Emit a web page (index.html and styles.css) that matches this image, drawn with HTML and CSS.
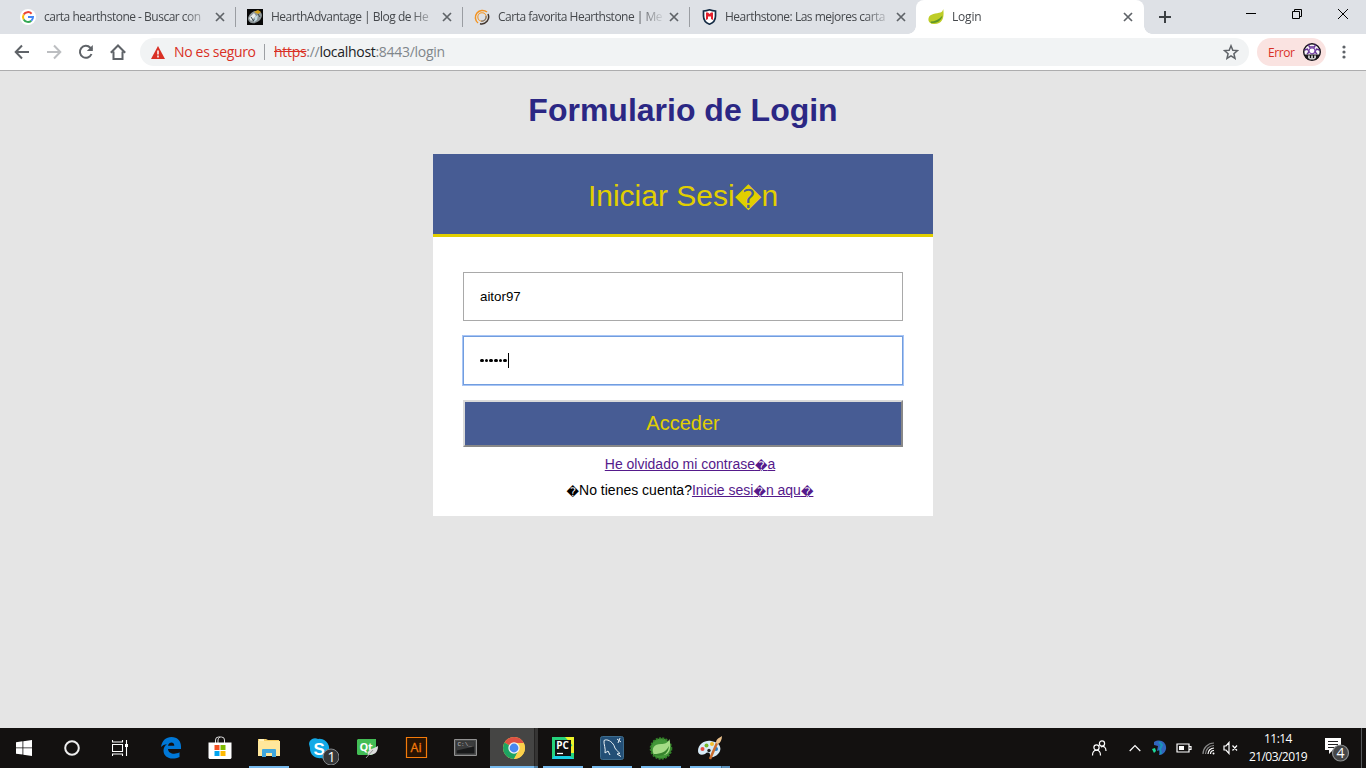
FILE: index.html
```html
<!DOCTYPE html>
<html lang="es">
<head>
<meta charset="utf-8">
<title>Login</title>
<link rel="stylesheet" href="styles.css">
</head>
<body>
<header class="tabstrip">
  <div class="tab">
    <svg class="fav" viewBox="0 0 16 16"><circle cx="8" cy="8" r="8" fill="#fff"/><g fill="none" stroke-width="2"><path d="M11.6 4.7A5 5 0 0 0 3.7 5.5" stroke="#ea4335"/><path d="M3.7 5.5a5 5 0 0 0 0 5" stroke="#fbbc05"/><path d="M3.7 10.5a5 5 0 0 0 7.6 1.2" stroke="#34a853"/><path d="M11.3 11.7A5 5 0 0 0 13 8H8" stroke="#4285f4"/></g></svg>
    <span class="title t1">carta hearthstone - Buscar con</span>
    <svg class="close" viewBox="0 0 10 10"><path d="M1 1l8 8M9 1l-8 8"/></svg>
  </div>
  <div class="tab">
    <svg class="fav" viewBox="0 0 16 16"><path fill="#080808" d="M0 0h16v16H0z"/><ellipse cx="8" cy="8" rx="7.500" ry="5.500" transform="rotate(-35 8 8)" fill="#8d9698"/><path d="M2 9l5-5 2 3-5 5z" fill="#e6eaea"/><path d="M7 3l4-2 3 2-3 2z" fill="#d3a11c"/><path d="M6 12l3-3M4 8l2 3M11 5l2 3" stroke="#37474d"/><path d="M8 8l3-2-1 5-3 2z" fill="#c3dbe4"/></svg>
    <span class="title t2">HearthAdvantage | Blog de He</span>
    <svg class="close" viewBox="0 0 10 10"><path d="M1 1l8 8M9 1l-8 8"/></svg>
  </div>
  <div class="tab">
    <svg class="fav" viewBox="0 0 16 16" fill="none"><path d="M4 14A7 7 0 1 1 13 3" stroke="#f39422" stroke-width="1.5"/><path d="M14 5a7 7 0 0 1-8 9.700" stroke="#41352e" stroke-width="1.500"/><circle cx="8" cy="8" r="4.200" stroke="#f39422" stroke-width="1.100"/><path d="M12 7a4.200 4.200 0 0 1-5 5" stroke="#777" stroke-width="1.200"/></svg>
    <span class="title t3">Carta favorita Hearthstone | Me</span>
    <svg class="close" viewBox="0 0 10 10"><path d="M1 1l8 8M9 1l-8 8"/></svg>
  </div>
  <div class="tab">
    <svg class="fav" viewBox="0 0 16 16"><path d="M2.500 2Q5.500 2 8.500 .8 11.500 2 14.500 2V7q0 6-6 8.200Q2.500 13 2.500 7z" fill="#fff" stroke="#142b45" stroke-width="1.700"/><path d="M5 3.500h2l1.500 1.500L10 3.500h2V11l-2-1V7.500H7V10l-2 1z" fill="#e3202d"/></svg>
    <span class="title t4">Hearthstone: Las mejores carta</span>
    <svg class="close" viewBox="0 0 10 10"><path d="M1 1l8 8M9 1l-8 8"/></svg>
  </div>
  <div class="tab active">
    <svg class="fav" viewBox="0 0 16 16"><path d="M15.200 0C16 5 16.500 15 6.500 15 2 15 0 12.500.5 9.500 1 4.500 9 4.500 12.500 3.500 14 3 15 1.500 15.200 0z" fill="#becd27"/><path d="M2.500 12.500C7 12.500 11 10.500 14.500 6.500 13.500 12 9 14.200 3 14.200z" fill="#5d9629"/></svg>
    <span class="title t5">Login</span>
    <svg class="close" viewBox="0 0 10 10"><path d="M1 1l8 8M9 1l-8 8"/></svg>
  </div>
  <svg class="plus" viewBox="0 0 12 12"><path d="M6 0v12M0 6h12" stroke="#3c4043" stroke-width="2"/></svg>
  <div class="wincontrols">
    <svg viewBox="0 0 10 10"><path d="M0 .5h10" transform="translate(0 4)"/></svg>
    <svg viewBox="0 0 10 10"><path d="M.5 2.500h7v7h-7zM2.500 2.500v-2h7v7h-2"/></svg>
    <svg viewBox="0 0 10 10"><path d="M0 0l10 10M10 0L0 10"/></svg>
  </div>
</header>
<nav class="toolbar">
  <div class="navicons">
    <svg viewBox="0 0 16 16"><path d="M15 8H2M8 1.500L1.700 8 8 14.500" stroke="#5f6368"/></svg>
    <svg viewBox="0 0 16 16"><path d="M1 8h13M8 1.500L14.300 8 8 14.500" stroke="#bcbec1"/></svg>
    <svg viewBox="0 0 16 16"><path d="M13.500 10A6 6 0 1 1 12.300 3.700L14 5.500" stroke="#5f6368"/><path d="M14.800 1v6H8.800z" fill="#5f6368" stroke="none"/></svg>
    <svg viewBox="0 0 16 16"><path d="M.8 8.700L8 1.500l7.200 7.200M3.500 7.500V15h9V7.500" stroke="#5f6368"/></svg>
  </div>
  <div class="omnibox">
    <svg class="warn" viewBox="0 0 14 13"><path d="M7 0l7 13H0z" fill="#d93025"/><path d="M7 4.500v4M7 9.500v2" stroke="#fff" stroke-width="1.500"/></svg>
    <span class="unsafe">No es seguro</span>
    <i class="bar"></i>
    <span class="url"><s>https</s>://<b>localhost</b>:8443/login</span>
    <svg class="star" viewBox="0 0 16 16"><path d="M8 1.800l1.800 4.400 4.700.4-3.600 3.100 1.100 4.600L8 11.800l-4 2.500 1.100-4.600L1.500 6.600l4.700-.4z" fill="none" stroke="#5f6368" stroke-width="1.500"/></svg>
  </div>
  <div class="profile"><span>Error</span>
    <svg viewBox="0 0 18 18"><circle cx="9" cy="9" r="8.300" fill="#f8f6fa" stroke="#17131b" stroke-width="1.400"/><path d="M5.500 1.500l1 2.500h5l1-2.500M1.500 7l3-1 1.500 3-2 2M16.500 7l-3-1L12 9l2 2" fill="none" stroke="#633092" stroke-width="1.400"/><circle cx="9" cy="7.800" r="3" fill="#fff" stroke="#7b4aa8" stroke-width="1.200"/><path d="M2 11.500h14V14l-3 3H5l-3-3z" fill="#1c191d"/><path d="M5 12.500h8V15l-2 1.500H7L5 15z" fill="#c9c9c9"/><path d="M7.500 12v3M10.500 12v3" stroke="#111" stroke-width="1.200"/></svg>
  </div>
  <svg class="dots" viewBox="0 0 4 14" fill="#5f6368"><circle cx="2" cy="2" r="1.600"/><circle cx="2" cy="7" r="1.600"/><circle cx="2" cy="12" r="1.600"/></svg>
</nav>
<main class="page">
  <h1>Formulario de Login</h1>
  <form class="card">
    <h2>Iniciar Sesi<span class="rep">�</span>n</h2>
    <div class="fields">
      <div class="field">aitor97</div>
      <div class="field focus"><span class="pw"><i></i><i></i><i></i><i></i><i></i><i></i></span><span class="caret"></span></div>
      <button class="submit" type="button">Acceder</button>
      <p class="forgot"><a href="#">He olvidado mi contrase<span class="rep">�</span>a</a></p>
      <p class="signup"><span class="rep">�</span>No tienes cuenta?<a href="#">Inicie sesi<span class="rep">�</span>n aqu<span class="rep">�</span></a></p>
    </div>
  </form>
</main>
<footer class="taskbar">
  <div class="sys">
    <svg viewBox="0 0 16 16" fill="#fff"><path d="M0 2.200l6.500-.9v6.200H0zM7.300 1.200L16 0v7.500H7.300zM0 8.300h6.500v6.300L0 13.700zM7.300 8.300H16V16l-8.700-1.200z"/></svg>
    <svg viewBox="0 0 16 16"><circle cx="8" cy="8" r="6.800" fill="none" stroke="#eee" stroke-width="2"/></svg>
    <svg viewBox="0 0 16 16" fill="none" stroke="#fff" stroke-width="1.100"><path d="M.5 4.500h10v7H.5zM.5 0v2h10V0M.5 16v-2h10v2M14.500 0v16"/><path d="M13 4h3v3h-3z" fill="#fff" stroke="none"/></svg>
  </div>
  <div class="apps">
    <div class="app"><svg viewBox="0 0 24 24"><path d="M2 11C3 4.500 7 1 12.500 1 18.500 1 22 5 22 10.500V13H9c.2 5 7 6 11.500 3.300v4.600C13 24.500 4.500 22 4.500 14.500c0-3 1.500-5 3.500-6.200C5.500 8.500 3.500 9.500 2 11zM9 9.700h6.300C15.300 5.500 10 5.500 9 9.700z" fill="#0078d7"/></svg></div>
    <div class="app"><svg viewBox="0 0 24 24"><path d="M7.500 7V4q0-3 3-3h3q3 0 3 3v3M10 7V4q0-2 2-3" fill="none" stroke="#ddd"/><path d="M.5 6.500h23V22l-1 1h-21l-1-1z" fill="#fff"/><path d="M6.500 9h5v5h-5z" fill="#f25022"/><path d="M12.500 9h5v5h-5z" fill="#7fba00"/><path d="M6.500 15h5v5h-5z" fill="#00a4ef"/><path d="M12.500 15h5v5h-5z" fill="#ffb900"/></svg></div>
    <div class="app open"><svg viewBox="0 0 24 24"><path d="M1 3h8l2 1h11v16H1z" fill="#f5cc60"/><path d="M1 5h22v15H1z" fill="#ffe79b"/><path d="M2 3h5v2H2z" fill="#fff3bd"/><path d="M5 21v-7q0-1 1-1h12q1 0 1 1v7h-4v-4H9v4z" fill="#3fa7dd"/></svg></div>
    <div class="app"><svg viewBox="0 0 32 28"><path d="M2 7A6 6 0 0 1 11 2 9.500 9.500 0 0 1 22 13a6 6 0 0 1-8 8A9.500 9.500 0 0 1 3 11z" fill="#13a9e6"/><text x="6.500" y="17.500" class="skype">S</text><circle cx="24" cy="20" r="8" fill="#353638" stroke="#85888b"/><text x="20.500" y="25" class="badge">1</text></svg></div>
    <div class="app"><svg viewBox="0 0 24 24"><path d="M3 3h18v12l-4 4H3L2 18V4z" fill="#43bd55"/><text x="4.500" y="14.500" class="qt">Qt</text><path d="M23 10c0 7-4 9-10 9-2-5 5-6 10-9z" fill="#ddd"/><path d="M11 22l7-8" stroke="#999" fill="none"/></svg></div>
    <div class="app"><svg viewBox="0 0 24 24"><path d="M2.500 1.500h20v20h-20z" fill="#281403" stroke="#f47b0a" stroke-width="1.200"/><text x="6.500" y="15.500" class="ai">Ai</text></svg></div>
    <div class="app"><svg viewBox="0 0 24 24"><path d="M1.500 3.500h22v16h-22z" fill="#4b4c4c" stroke="#929292"/><path d="M3.500 5.500h18v12h-18z" fill="#18191a"/><path d="M3.500 5.500h18v5l-18 4z" fill="#3b3c3d"/><text x="4.500" y="10" class="cmd">C:\_</text></svg></div>
    <div class="app open chrome"><svg viewBox="0 0 24 24"><circle cx="12" cy="12" r="11" fill="#fbd04b"/><path d="M12 12L2.500 6.500A11 11 0 0 1 21.800 7H12z" fill="#dd5144"/><path d="M2.500 6.500A11 11 0 0 0 12 23l4.500-8.400L12 12z" fill="#1da462"/><path d="M12 23l4.600-8.300L18 7h3.800A11 11 0 0 1 12 23z" fill="#fbd04b"/><circle cx="12" cy="12" r="5.700" fill="#f2f2f2"/><circle cx="12" cy="12" r="4.400" fill="#4688f1"/></svg></div>
    <div class="app open"><svg viewBox="0 0 24 24"><path d="M1 1h22v22H1z" fill="#25d27c"/><path d="M14 1h9v10z" fill="#edf52a"/><path d="M23 8v9H13z" fill="#f1ed2a"/><path d="M1 23L8 13l15 10z" fill="#19cfe5"/><path d="M4 4h16v16H4z" fill="#111"/><text x="5.300" y="13" class="pc">PC</text><path d="M6 17.500h6" stroke="#fff" stroke-width="1.300"/></svg></div>
    <div class="app open"><svg viewBox="0 0 24 24"><rect x=".5" y=".5" width="23" height="23" rx="2" fill="#234f76" stroke="#3d6c8d"/><path d="M5 17C6 13 3.500 8 4 4.500c3-2 8 1 10 5 1 4 3 5 6 8l-3 .5 4 2.500M5 17l3-2 2 4M17 3l4 3M20 2l-2 5" fill="none" stroke="#e7f0f4"/></svg></div>
    <div class="app open"><svg viewBox="0 0 24 24"><circle cx="12" cy="12.500" r="10.300" fill="#439838" stroke="#348329" stroke-width="2" stroke-dasharray="2 1.300"/><path d="M20.500 3C22 11 22 19 13 19H5C2 12 5 8 12 8c4 0 7-1 8.500-5z" fill="#a5dc86"/><path d="M5 18c7 0 12-2 15-8-1 9-7 11-15 9z" fill="#36832c"/></svg></div>
    <div class="app open paint"><svg viewBox="0 0 24 24"><path d="M0 15C0 8 7 4 13 5c9 1 12 8 7 13-4 4-8 4-8 1 0-3-3-3-5-1-4 2-7 0-7-3z" fill="#d7ebf7"/><circle cx="4.500" cy="13" r="2" fill="#e84d40"/><circle cx="8.500" cy="9.500" r="2" fill="#76b82a"/><circle cx="14" cy="8" r="2" fill="#f1bd2e"/><circle cx="18" cy="13" r="2" fill="#287cc5"/><circle cx="11" cy="14.500" r="1.700" fill="#222"/><path d="M12 23l7-16" stroke="#c96d2f" stroke-width="2.500"/><path d="M18 7c0-4 3-5 6-7 0 4-2 7-4 8z" fill="#ecc28c"/></svg></div>
  </div>
  <div class="tray">
    <svg class="people" viewBox="0 0 16 16"><circle cx="5.500" cy="7.500" r="2.600"/><path d="M1.500 15.500c0-7 8-7 8 0"/><circle cx="11" cy="3.500" r="2.600"/><path d="M10 7c3-1.500 5 .5 5 4"/></svg>
    <svg class="up" viewBox="0 0 12 8"><path d="M.7 7L6 1.500 11.300 7"/></svg>
    <svg class="globe" viewBox="0 0 16 16"><path d="M3 2C10-2 16 3 15 9c-1 4-4 6-7 6l1-5-3 1 1-5-4-1z" fill="#3265bd" stroke="none"/><path d="M8 2l3 3-2 4 1 5" stroke="#1994ba" stroke-width="2"/><path d="M1 9l3-1 1 3-2 2z" fill="#1ddb9b" stroke="none"/></svg>
    <svg class="battery" viewBox="0 0 16 10"><path d="M1 1h12v8H1zM13 3.500h2v3h-2"/><path d="M3 3h5v4H3z" fill="#fff" stroke="none"/></svg>
    <svg class="wifi" viewBox="0 0 13 13"><g stroke="#888"><path d="M1 12A11 11 0 0 1 12 1"/><path d="M3.500 12A8.500 8.500 0 0 1 12 3.500"/></g><path d="M6 12a6 6 0 0 1 6-6M8.500 12A3.500 3.500 0 0 1 12 8.500"/><circle cx="11.500" cy="11.500" r="1" fill="#fff" stroke="none"/></svg>
    <svg class="sound" viewBox="0 0 15 14"><path d="M1 5h2l3-3.500v11L3 9H1zM9.500 4.500l4.500 5M14 4.500l-4.500 5"/></svg>
    <div class="clock"><span class="time">11:14</span><span class="date">21/03/2019</span></div>
    <svg class="notify" viewBox="0 0 26 26"><path d="M1 1h16v12H9l-4 4v-4H1z" fill="#fff" stroke="none"/><path d="M4 4.500h10M4 7.500h10M4 10.500h6" stroke="#222"/><circle cx="16.500" cy="16" r="8" fill="#454647" stroke="#8a8d8e"/><text x="12.500" y="20.500" class="badge">4</text></svg>
    <i class="peek"></i>
  </div>
</footer>
</body>
</html>
```
FILE: styles.css
```css
* { box-sizing: border-box; }
body { margin: 0; width: 1366px; height: 768px; overflow: hidden; display: flex; flex-direction: column; font-family: "Open Sans", "Noto Sans", sans-serif; }
svg { display: block; flex: none; }

.tabstrip { height: 34px; flex: none; background: #dee1e6; display: flex; align-items: center; padding-left: 9px; }
.tab { width: 227px; height: 34px; flex: none; display: flex; align-items: center; padding: 0 11px; position: relative; }
.tab:nth-child(-n+3)::after { content: ""; position: absolute; right: 0; top: 7px; width: 1px; height: 20px; background: #9a9da2; }
.fav { width: 16px; height: 16px; }
.title { width: 164px; margin-left: 8px; flex: none; white-space: nowrap; font-size: 12px; line-height: 18px; color: #45484c; letter-spacing: -.5px; -webkit-mask-image: linear-gradient(90deg, #000 85%, transparent 100%); mask-image: linear-gradient(90deg, #000 85%, transparent 102%); }
.t5 { letter-spacing: -.2px; }
.close { width: 10px; height: 10px; margin-left: 7px; stroke: #5f6368; stroke-width: 1.7; }
.tab.active { width: 228px; margin-left: -1px; padding-left: 12px; background: #fff; border-radius: 8px 8px 0 0; }
.active::before, .active::after { content: ""; position: absolute; bottom: 0; width: 8px; height: 8px; }
.active::before { left: -8px; background: radial-gradient(circle at 0 0, transparent 7.5px, #fff 8px); }
.active::after { right: -8px; background: radial-gradient(circle at 100% 0, transparent 7.5px, #fff 8px); }
.plus { width: 12px; height: 12px; margin-left: 15px; }
.wincontrols { margin: 0 18px 6px auto; display: flex; gap: 36px; }
.wincontrols svg { width: 10px; height: 10px; fill: none; stroke: #000; stroke-width: 1; overflow: visible; }

.toolbar { height: 37px; flex: none; background: #fff; border-bottom: 1px solid #adadae; display: flex; align-items: center; padding-left: 14px; }
.navicons { display: flex; gap: 16px; width: 126px; }
.navicons svg { width: 16px; height: 16px; fill: none; stroke-width: 2; }
.omnibox { width: 1109px; height: 28px; border-radius: 14px; background: #f1f3f4; display: flex; align-items: center; padding: 0 10px 0 11px; font-size: 14px; line-height: 18px; white-space: nowrap; }
.warn { width: 14px; height: 13px; }
.unsafe { width: 82px; margin-left: 9px; color: #d93025; letter-spacing: -.33px; }
.bar { width: 1px; height: 16px; margin: 0 9px 0 8px; background: #9da0a4; }
.url { color: #80868b; letter-spacing: -.29px; }
.url s { color: #d93025; }
.url b { color: #202124; font-weight: 400; }
.star { width: 16px; height: 16px; margin-left: auto; }
.profile { width: 69px; height: 28px; margin-left: 8px; border-radius: 14px; background: #fae3e1; display: flex; align-items: center; padding: 0 5px 0 11px; justify-content: space-between; color: #d93025; font-size: 12px; letter-spacing: -.4px; }
.profile svg { width: 18px; height: 18px; }
.dots { width: 4px; height: 14px; margin-left: 16px; }

.page { flex: 1; background: #e5e5e5; font-family: "Liberation Sans", Arial, sans-serif; display: flex; flex-direction: column; align-items: center; }
h1 { margin: 20px 0 25px; height: 38px; line-height: 38px; font-size: 32px; font-weight: 700; color: #2b2784; }
.card { width: 500px; height: 362px; background: #fff; }
h2 { margin: 0; height: 83px; line-height: 84px; border-bottom: 3px solid #e2cf00; background: #475c94; color: #e2cf00; font-size: 30px; font-weight: 400; text-align: center; }
.rep { font-family: "DejaVu Sans", sans-serif; line-height: 1; font-size: .87em; vertical-align: -.06em; }
.fields { padding: 35px 30px 0; display: flex; flex-direction: column; }
.field { height: 49px; border: 1px solid #a9a9a9; padding: 0 16px; display: flex; align-items: center; font-size: 13.33px; color: #000; }
.focus { margin-top: 15px; border-color: #719ddf; box-shadow: 0 0 0 1px #a8c5f5; }
.pw { display: flex; gap: 1px; padding-right: .5px; }
.pw i { width: 3.700px; height: 3.700px; border-radius: 50%; background: #000; }
.caret { width: 1px; height: 15px; background: #000; }
.submit { height: 47px; margin-top: 15px; padding: 0 0 1px; border: 2px solid; border-color: #dadada #888 #888 #dadada; background: #475c94; color: #e2cf00; font: 20px "Liberation Sans", Arial, sans-serif; }
p { margin: 0; height: 18px; font-size: 14px; line-height: 18px; text-align: center; white-space: nowrap; }
a { color: #551a8b; }
.forgot { margin-top: 8px; padding-left: 14px; }
.signup { margin-top: 8px; padding-left: 14px; }

.taskbar { height: 40px; flex: none; background: #131110; display: flex; color: #fff; }
.sys { width: 147px; display: flex; align-items: center; padding-left: 16px; gap: 32px; }
.sys svg { width: 16px; height: 16px; }
.apps { display: flex; }
.app { width: 49px; height: 40px; display: flex; align-items: center; justify-content: center; position: relative; padding-right: 1px; }
.app svg { width: 24px; height: 24px; }
.app:nth-child(4) svg { width: 32px; height: 28px; margin: 6px 0 0 9px; }
.open::after { content: ""; position: absolute; left: 4px; bottom: 0; width: 40px; height: 2px; background: #76b9ed; }
.chrome { background: linear-gradient(90deg, #454544 44px, #252423 44px 45px, #363534 45px 48px, transparent 48px); }
.chrome::after { left: 0; width: 48px; background: linear-gradient(90deg, #76b9ed 44px, #507fa4 44px); }
.paint::after { background: linear-gradient(90deg, #76b9ed 31px, #456d8c 31px 32px, #5c91bb 32px); }
.skype { font: 700 17px "Liberation Sans", sans-serif; fill: #fff; }
.badge { font: 14px "Open Sans", sans-serif; fill: #fff; stroke: none; }
.qt { font: 700 11px "Open Sans", sans-serif; fill: #fff; letter-spacing: -.3px; }
.ai { font: 12.5px "Open Sans", sans-serif; fill: #f47b0a; stroke: #f47b0a; stroke-width: .3; }
.cmd { font: 6px "Liberation Mono", monospace; fill: #bbb; }
.pc { font: 700 10px "Open Sans", sans-serif; fill: #fff; }
.tray { margin-left: auto; display: flex; align-items: center; width: 275px; }
.tray svg { fill: none; stroke: #fff; stroke-width: 1.2; }
.people { width: 16px; height: 16px; }
.up { width: 12px; height: 8px; margin-left: 22px; }
.globe { width: 16px; height: 16px; margin-left: 10px; }
.battery { width: 16px; height: 10px; margin-left: 9px; }
.wifi { width: 13px; height: 13px; margin-left: 10px; }
.sound { width: 15px; height: 14px; margin-left: 8px; }
.clock { width: 60px; margin-left: 10px; display: flex; flex-direction: column; align-items: center; font-size: 12px; line-height: 18px; letter-spacing: -.55px; white-space: nowrap; }
.tray .notify { width: 26px; height: 26px; margin: 3px 0 0 16px; }
.tray .badge { stroke: none; fill: #fff; }
.peek { width: 1px; height: 40px; margin-left: auto; margin-right: 4px; background: #55585b; }
```
